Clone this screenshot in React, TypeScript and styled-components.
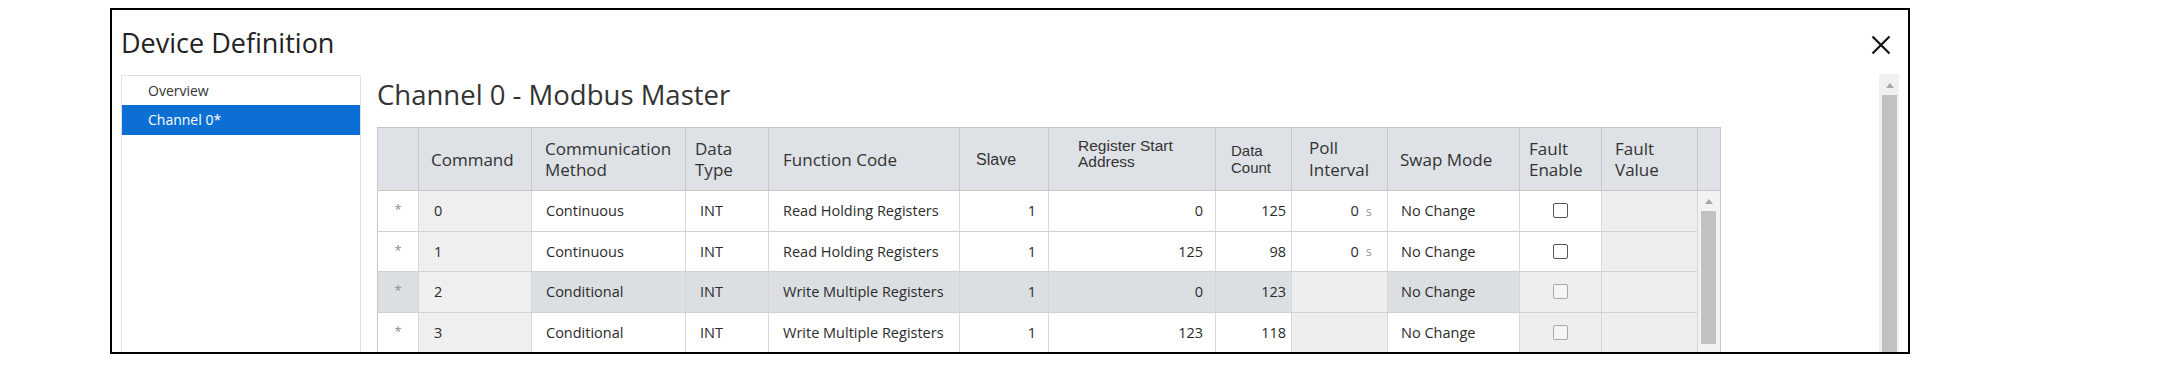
import React from "react";
import styled, { createGlobalStyle } from "styled-components";

const GlobalStyle = createGlobalStyle`
  html, body {
    margin: 0;
    padding: 0;
    background: #fff;
  }
  body {
    font-family: "Open Sans", "Noto Sans", sans-serif;
    color: #222;
  }
`;

const Frame = styled.div`
  box-sizing: border-box;
  margin: 8px 0 0 110px;
  width: 1800px;
  height: 346px;
  border: 2px solid #000;
  overflow: hidden;
  display: flex;
  flex-direction: column;
  background: #fff;
`;

const TitleBar = styled.div`
  display: flex;
  align-items: flex-start;
  justify-content: space-between;
  height: 65px;
  padding: 18px 17px 0 9px;
  box-sizing: border-box;
  flex-shrink: 0;
`;

const Title = styled.h1`
  margin: 0;
  font-size: 27px;
  line-height: 30px;
  font-weight: 400;
  color: #222;
`;

const CloseButton = styled.button`
  border: none;
  background: none;
  padding: 0;
  margin-top: 7px;
  width: 20px;
  height: 20px;
  cursor: pointer;
`;

const Body = styled.div`
  display: flex;
  flex: 1;
  min-height: 0;
`;

const Sidebar = styled.nav`
  width: 240px;
  margin-left: 9px;
  border: 1px solid #e1e1e1;
  border-bottom: none;
  box-sizing: border-box;
  flex-shrink: 0;
`;

const NavItem = styled.div<{ $selected?: boolean }>`
  height: ${(p) => (p.$selected ? 30 : 29)}px;
  line-height: ${(p) => (p.$selected ? 30 : 29)}px;
  padding-left: 26px;
  font-size: 14px;
  color: ${(p) => (p.$selected ? "#fff" : "#333")};
  background: ${(p) => (p.$selected ? "#0b6fd3" : "transparent")};
`;

const Main = styled.section`
  flex: 1;
  margin-left: 16px;
  display: flex;
  flex-direction: column;
  min-width: 0;
`;

const Heading = styled.h2`
  margin: 5px 0 17px;
  font-size: 27.5px;
  line-height: 30px;
  font-weight: 400;
  color: #333;
`;

const Table = styled.div`
  width: 1344px;
  border: 1px solid #c3c7cb;
  border-bottom: none;
  box-sizing: border-box;
`;

const COLS = "41px 113px 154px 83px 191px 89px 167px 76px 96px 132px 82px 96px";

const HeaderRow = styled.div`
  display: grid;
  grid-template-columns: ${COLS} 22px;
  height: 63px;
  background: #dee1e5;
  border-bottom: 1px solid #c3c7cb;
  box-sizing: border-box;
`;

const HeadCell = styled.div<{ $indent?: number; $arial?: boolean; $size?: number; $lh?: number; $lift?: number }>`
  display: flex;
  align-items: center;
  padding-left: ${(p) => p.$indent ?? 12}px;
  padding-bottom: ${(p) => p.$lift ?? 0}px;
  border-right: 1px solid #c6cacd;
  box-sizing: border-box;
  font-family: ${(p) => (p.$arial ? '"Liberation Sans", Arial, sans-serif' : '"Open Sans", sans-serif')};
  font-size: ${(p) => p.$size ?? 17}px;
  line-height: ${(p) => p.$lh ?? 21}px;
  color: #333;
  &:last-child {
    border-right: none;
  }
`;

const TableBody = styled.div`
  display: flex;
`;

const Rows = styled.div`
  width: 1320px;
`;

const Row = styled.div`
  display: grid;
  grid-template-columns: ${COLS};
  height: 40.5px;
  border-bottom: 1px solid #d2d2d2;
  box-sizing: border-box;
`;

type Tone = "plain" | "ro" | "off";

const Cell = styled.div<{ $tone?: Tone; $active?: boolean; $right?: boolean; $center?: boolean; $pad?: number }>`
  display: flex;
  align-items: center;
  justify-content: ${(p) => (p.$center ? "center" : p.$right ? "flex-end" : "flex-start")};
  padding: ${(p) => (p.$right ? `0 ${p.$pad ?? 12}px 0 0` : p.$center ? "0" : `0 0 0 ${p.$pad ?? 14}px`)};
  border-right: 1px solid #d6d6d6;
  box-sizing: border-box;
  font-size: 14.5px;
  color: #2b2b2b;
  white-space: nowrap;
  background: ${(p) =>
    p.$tone === "ro" ? "#efefef" : p.$tone === "off" ? "#eeeeee" : p.$active ? "#dcdfe2" : "#fff"};
`;

const Star = styled.span`
  color: #8c8c8c;
  font-size: 13px;
  margin-top: -3px;
`;

const Unit = styled.span`
  color: #999;
  font-size: 13px;
  margin-left: 7px;
`;

const Check = styled.span<{ $disabled?: boolean }>`
  width: 15px;
  height: 15px;
  box-sizing: border-box;
  border: 1.5px solid ${(p) => (p.$disabled ? "#a8a8a8" : "#555")};
  border-radius: 2px;
  background: ${(p) => (p.$disabled ? "#f5f5f5" : "#fff")};
`;

const ScrollTrack = styled.div`
  width: 22px;
  background: #f2f2f2;
  display: flex;
  flex-direction: column;
  align-items: flex-start;
  padding-left: 3px;
  box-sizing: border-box;
`;

const UpArrow = styled.div`
  width: 0;
  height: 0;
  border-left: 4px solid transparent;
  border-right: 4px solid transparent;
  border-bottom: 5px solid #a8a8a8;
  margin: 8px 0 7px 4px;
`;

const Thumb = styled.div<{ $h: number }>`
  width: 15px;
  height: ${(p) => p.$h}px;
  background: #c1c1c1;
`;

const PageScroll = styled.div`
  width: 20px;
  margin: -1px 9px 0 0;
  background: #f0f0f0;
  display: flex;
  flex-direction: column;
  align-items: flex-start;
  padding-left: 3px;
  box-sizing: border-box;
  flex-shrink: 0;
`;

const PageArrow = styled(UpArrow)`
  margin: 9px 0 7px 4px;
`;

type Data = {
  cmd: string;
  method: string;
  fc: string;
  start: string;
  count: string;
  poll?: string;
  active?: boolean;
};

const rows: Data[] = [
  { cmd: "0", method: "Continuous", fc: "Read Holding Registers", start: "0", count: "125", poll: "0" },
  { cmd: "1", method: "Continuous", fc: "Read Holding Registers", start: "125", count: "98", poll: "0" },
  { cmd: "2", method: "Conditional", fc: "Write Multiple Registers", start: "0", count: "123", active: true },
  { cmd: "3", method: "Conditional", fc: "Write Multiple Registers", start: "123", count: "118" },
];

const CloseIcon = () => (
  <svg width="20" height="20" viewBox="0 0 20 20">
    <path d="M1.5 1.5 L18.5 18.5 M18.5 1.5 L1.5 18.5" stroke="#111" strokeWidth="2.2" />
  </svg>
);

export default function App() {
  return (
    <>
      <GlobalStyle />
      <Frame>
        <TitleBar>
          <Title>Device Definition</Title>
          <CloseButton aria-label="Close">
            <CloseIcon />
          </CloseButton>
        </TitleBar>
        <Body>
          <Sidebar>
            <NavItem>Overview</NavItem>
            <NavItem $selected>Channel 0*</NavItem>
          </Sidebar>
          <Main>
            <Heading>Channel 0 - Modbus Master</Heading>
            <Table>
              <HeaderRow>
                <HeadCell />
                <HeadCell>Command</HeadCell>
                <HeadCell $indent={13}>
                  Communication
                  <br />
                  Method
                </HeadCell>
                <HeadCell $indent={9}>
                  Data
                  <br />
                  Type
                </HeadCell>
                <HeadCell $indent={14}>Function Code</HeadCell>
                <HeadCell $indent={16} $arial $size={16}>
                  Slave
                </HeadCell>
                <HeadCell $indent={29} $arial $size={15.5} $lh={16} $lift={10}>
                  Register Start
                  <br />
                  Address
                </HeadCell>
                <HeadCell $indent={15} $arial $size={15} $lh={17}>
                  Data
                  <br />
                  Count
                </HeadCell>
                <HeadCell $indent={17} $lh={22}>
                  Poll
                  <br />
                  Interval
                </HeadCell>
                <HeadCell $indent={12}>Swap Mode</HeadCell>
                <HeadCell $indent={9}>
                  Fault
                  <br />
                  Enable
                </HeadCell>
                <HeadCell $indent={13}>
                  Fault
                  <br />
                  Value
                </HeadCell>
                <HeadCell />
              </HeaderRow>
              <TableBody>
                <Rows>
                  {rows.map((r) => (
                    <Row key={r.cmd}>
                      <Cell $center $active={r.active}>
                        <Star>*</Star>
                      </Cell>
                      <Cell $tone="ro" $pad={15}>
                        {r.cmd}
                      </Cell>
                      <Cell $active={r.active}>{r.method}</Cell>
                      <Cell $active={r.active}>INT</Cell>
                      <Cell $active={r.active}>{r.fc}</Cell>
                      <Cell $right $active={r.active} $pad={12}>
                        1
                      </Cell>
                      <Cell $right $active={r.active} $pad={12}>
                        {r.start}
                      </Cell>
                      <Cell $right $active={r.active} $pad={5}>
                        {r.count}
                      </Cell>
                      {r.poll ? (
                        <Cell $right $active={r.active} $pad={15}>
                          {r.poll}
                          <Unit>s</Unit>
                        </Cell>
                      ) : (
                        <Cell $tone="off" />
                      )}
                      <Cell $active={r.active} $pad={13}>
                        No Change
                      </Cell>
                      <Cell $center $tone={r.poll ? "plain" : "off"}>
                        <Check $disabled={!r.poll} />
                      </Cell>
                      <Cell $tone="off" />
                    </Row>
                  ))}
                  {/* next row, only its top edge shows above the frame */}
                  <Row>
                    <Cell />
                    <Cell $tone="ro" />
                    <Cell />
                    <Cell />
                    <Cell />
                    <Cell />
                    <Cell />
                    <Cell />
                    <Cell $tone="off" />
                    <Cell />
                    <Cell $tone="off" />
                    <Cell $tone="off" />
                  </Row>
                </Rows>
                <ScrollTrack>
                  <UpArrow />
                  <Thumb $h={133} />
                </ScrollTrack>
              </TableBody>
            </Table>
          </Main>
          <PageScroll>
            <PageArrow />
            <Thumb $h={300} />
          </PageScroll>
        </Body>
      </Frame>
    </>
  );
}
